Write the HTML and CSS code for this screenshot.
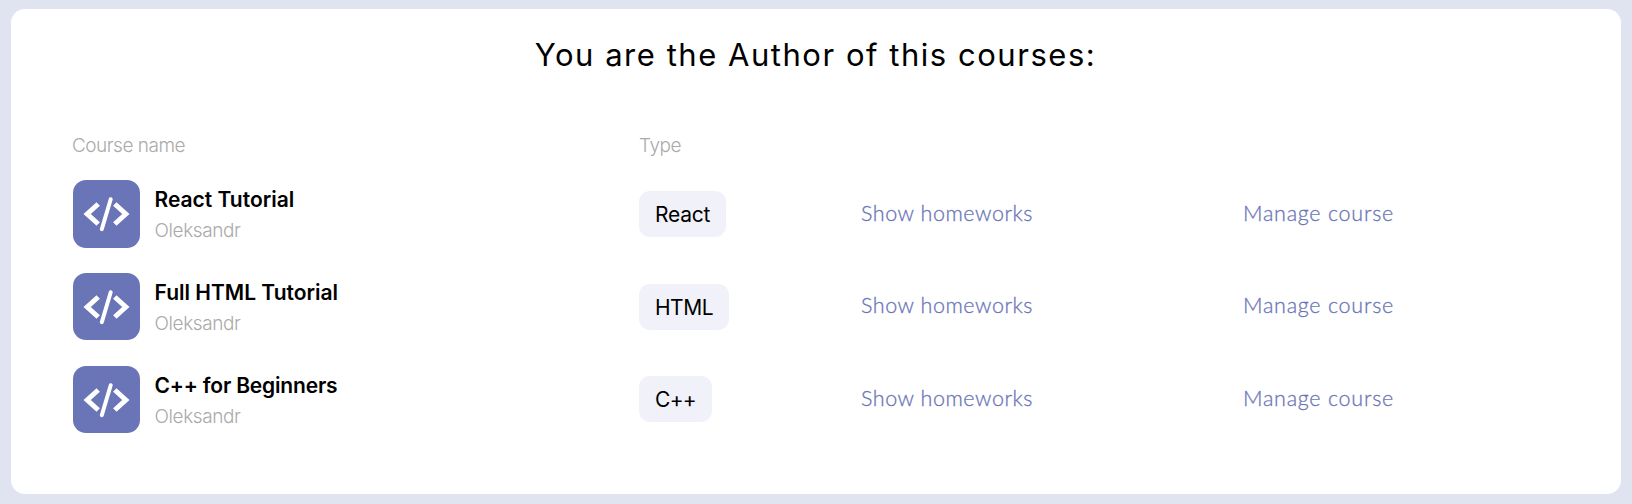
FILE: index.html
```html
<!DOCTYPE html>
<html lang="en">
<head>
<meta charset="utf-8">
<title>Courses</title>
<link rel="stylesheet" href="styles.css">
</head>
<body>
<svg class="defs" aria-hidden="true">
  <symbol id="code" viewBox="0 0 67 67.5">
    <path d="M25.2 24 14.2 34 25.2 44M41.8 24 52.8 34 41.8 44" fill="none" stroke="#fff" stroke-width="5"/>
    <path d="M37.7 19.2 28.8 49.2" fill="none" stroke="#fff" stroke-width="4" stroke-linecap="round"/>
  </symbol>
</svg>
<main class="card">
  <h1 class="title">You are the Author of this courses:</h1>
  <div class="row head"><span class="label label-name">Course name</span><span class="label label-type">Type</span></div>
  <div class="row">
    <div class="course"><svg class="icon"><use href="#code"/></svg><div class="info"><div class="name n1">React Tutorial</div><div class="author">Oleksandr</div></div></div>
    <div><span class="tag t1">React</span></div>
    <a class="link show">Show homeworks</a>
    <a class="link manage">Manage course</a>
  </div>
  <div class="row">
    <div class="course"><svg class="icon"><use href="#code"/></svg><div class="info"><div class="name n2">Full HTML Tutorial</div><div class="author">Oleksandr</div></div></div>
    <div><span class="tag t2">HTML</span></div>
    <a class="link show">Show homeworks</a>
    <a class="link manage">Manage course</a>
  </div>
  <div class="row">
    <div class="course"><svg class="icon"><use href="#code"/></svg><div class="info"><div class="name n3">C++ for Beginners</div><div class="author">Oleksandr</div></div></div>
    <div><span class="tag t3">C++</span></div>
    <a class="link show">Show homeworks</a>
    <a class="link manage">Manage course</a>
  </div>
</main>
</body>
</html>
```
FILE: styles.css
```css
* { box-sizing: border-box; }
body {
  margin: 0;
  height: 504px;
  padding: 9px 11px 10px;
  background: #e0e3f0;
  font-family: Inter, "Liberation Sans", sans-serif;
  color: #000;
}
.defs { display: none; }
.card {
  height: 485px;
  padding: 26px 61px 0 62px;
  background: #fff;
  border-radius: 14px;
}
.title {
  margin: 0 0 51.5px -2px;
  font-size: 31px;
  font-weight: 400;
  line-height: 40px;
  letter-spacing: 1.53px;
  text-align: center;
  white-space: nowrap;
}
.row {
  display: grid;
  grid-template-columns: 566px 221px 383px 1fr;
  align-items: center;
  height: 67.5px;
  margin-bottom: 25.3px;
  white-space: nowrap;
}
.head { height: 40px; margin-bottom: 13.6px; padding-bottom: 2px; }
.label {
  font-size: 19px;
  font-weight: 300;
  letter-spacing: -0.5px;
  color: #aaa;
}
.label-name { margin-left: -1px; }
.course { display: flex; gap: 14.5px; }
.icon {
  width: 67px;
  height: 67.5px;
  border-radius: 13px;
  background: #6a75b7;
}
.info { padding-top: 4.3px; }
.name {
  font-size: 21px;
  font-weight: 600;
  line-height: 31px;
}
.n3 { letter-spacing: -0.18px; }
.author {
  font-size: 19px;
  font-weight: 300;
  line-height: 32px;
  letter-spacing: -0.4px;
  color: #aaa;
}
.tag {
  display: inline-block;
  height: 46px;
  padding: 0 16px;
  border-radius: 11px;
  background: #f1f1f9;
  font-size: 21px;
  line-height: 47.6px;
  vertical-align: middle;
}
.t1 { letter-spacing: -0.25px; }
.t2 { letter-spacing: -0.5px; }
.t3 { letter-spacing: -0.7px; }
.link {
  padding: 0 0 2.6px 1px;
  font-family: Lato, "Open Sans", sans-serif;
  font-size: 21.5px;
  font-weight: 300;
  letter-spacing: 0.55px;
  color: #6a75b7;
  -webkit-text-stroke: 0.3px #6a75b7;
}
.manage { padding-left: 0; letter-spacing: 0.75px; }
```
